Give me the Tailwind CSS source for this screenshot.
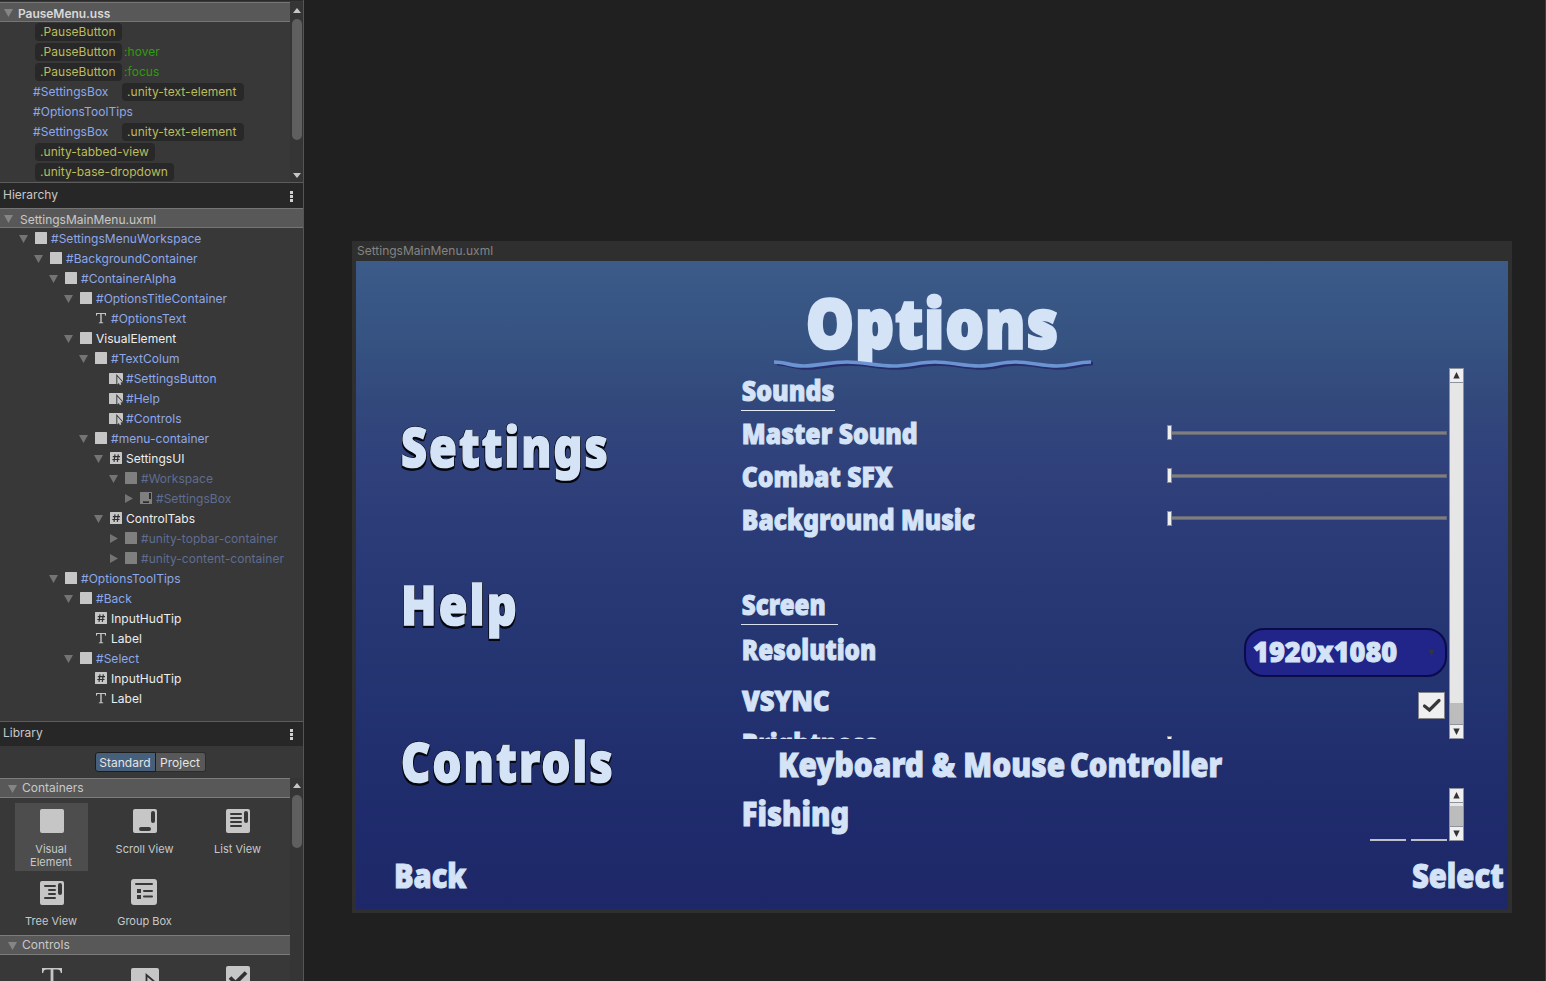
<!DOCTYPE html>
<html lang="en">
<head>
<meta charset="utf-8">
<title>UI Builder</title>
<script src="https://cdn.jsdelivr.net/npm/@tailwindcss/browser@4"></script>
</head>
<body class="w-[1546px] h-[981px] overflow-hidden bg-[#202020] font-['Inter',sans-serif] text-xs text-[#c8c8c8] flex">
<svg class="hidden">
  <symbol id="down" viewBox="0 0 9 8"><path d="M0 0h9L4.500 8z" fill="currentColor"/></symbol>
  <symbol id="right" viewBox="0 0 9 9"><path d="M1 0v9l8-4.500z" fill="currentColor"/></symbol>
  <symbol id="box" viewBox="0 0 14 14"><rect x="1" y="1" width="12" height="12" rx=".5" fill="#c6c6c6"/></symbol>
  <symbol id="text" viewBox="0 0 14 14"><path d="M2 2h10v2.800h-.8c0-1.300-.3-1.900-1.200-1.900H7.700v8.300l1.500.3v.7H4.800v-.7l1.500-.3V2.900H4c-.9 0-1.200.6-1.200 1.900H2z" fill="#c6c6c6"/></symbol>
  <symbol id="btn" viewBox="0 0 14 14"><rect y="2" width="14" height="11" rx=".5" fill="#c6c6c6"/><path d="M7.300 3v11h6.700v-3.500z" fill="#383838"/><path d="M8.300 5.600v7.900l1.600-1.500.9 2 1.500-.6-.8-1.900 2.100-.3z" fill="#c6c6c6"/></symbol>
  <symbol id="hash" viewBox="0 0 14 14"><rect x="1" y="1" width="12" height="12" rx=".5" fill="#c6c6c6"/><path d="M6 3.300l-1 7.500M9.300 3.300l-1 7.500M3.800 5.600H11M3.300 8.500h7.200" stroke="#303030" stroke-width="1.200" fill="none"/></symbol>
  <symbol id="scroll" viewBox="0 0 14 14"><rect x="1" y="1" width="12" height="12" rx=".5" fill="#c6c6c6"/><rect x="10" y="2" width="2" height="6" fill="#202020"/><rect x="4" y="10.300" width="6" height="1.700" fill="#202020"/></symbol>
</svg>

<aside class="w-[304px] h-full shrink-0 bg-[#383838] border-r border-[#555] flex flex-col overflow-hidden">
  <!-- Style sheets -->
  <section class="h-[183px] shrink-0 flex pt-[2px] border-b border-[#5c5c5c] relative">
    <div class="absolute inset-x-0 top-0 h-px bg-[#2a2a2a]"></div>
    <div class="w-[290px] overflow-hidden">
      <div class="h-5 bg-[#585858] border-y border-[#757575] flex items-center pl-1 gap-[5px]"><svg class="w-[9px] h-2 mt-0.5 text-[#858585]"><use href="#down"/></svg><b class="text-[12px] font-semibold tracking-[-.04px] text-[#d8d8d8] pt-[3px] leading-4">PauseMenu.uss</b></div>
      <div class="flex flex-col text-[#bcbc5c] leading-[18px] tracking-[.05px] *:h-5 *:flex *:items-center *:pl-[33px]">
        <div><span class="bg-[#282828] rounded-sm ml-[2px] px-[5px] w-[87px] h-[18px]">.PauseButton</span></div>
        <div><span class="bg-[#282828] rounded-sm ml-[2px] px-[5px] w-[87px] h-[18px]">.PauseButton</span><span class="text-[#2f9c0a] pl-[2px]">:hover</span></div>
        <div><span class="bg-[#282828] rounded-sm ml-[2px] px-[5px] w-[87px] h-[18px]">.PauseButton</span><span class="text-[#2f9c0a] pl-[2px]">:focus</span></div>
        <div><span class="text-[#8ea8ea] w-[89px]">#SettingsBox</span><span class="bg-[#282828] rounded-sm px-[5px] w-[122px] h-[18px]">.unity-text-element</span></div>
        <div><span class="text-[#8ea8ea]">#OptionsToolTips</span></div>
        <div><span class="text-[#8ea8ea] w-[89px]">#SettingsBox</span><span class="bg-[#282828] rounded-sm px-[5px] w-[122px] h-[18px]">.unity-text-element</span></div>
        <div><span class="bg-[#282828] rounded-sm ml-[2px] px-[5px] w-[120px] h-[18px]">.unity-tabbed-view</span></div>
        <div><span class="bg-[#282828] rounded-sm ml-[2px] px-[5px] w-[139px] h-[18px]">.unity-base-dropdown</span></div>
      </div>
    </div>
    <div class="w-[13px] bg-[#353535] flex flex-col items-center pt-1.5 pb-1">
      <svg class="w-2 h-[5px]" viewBox="0 0 8 5"><path d="M0 5h8L4 0z" fill="#c6c6c6"/></svg>
      <div class="w-[10px] h-[121px] mt-1.5 ml-px rounded-full bg-[#5f5f5f]"></div>
      <svg class="w-2 h-[5px] mt-auto" viewBox="0 0 8 5"><path d="M0 0h8L4 5z" fill="#c6c6c6"/></svg>
    </div>
  </section>

  <!-- Hierarchy -->
  <div class="h-[25px] shrink-0 bg-[#272727] pl-[3px] pr-[10px] flex items-center justify-between"><span class="-mt-0.5">Hierarchy</span><svg class="w-[3px] h-[11px] mt-px" viewBox="0 0 3 11"><path d="M0 0h3v3H0zM0 4h3v3H0zM0 8h3v3H0z" fill="#d0d0d0"/></svg></div>
  <section class="h-[513px] shrink-0">
    <div class="h-5 bg-[#585858] border-y border-[#757575] flex items-center pl-1 gap-[7px]"><svg class="w-[9px] h-2 mt-0.5 text-[#858585]"><use href="#down"/></svg><span class="pt-[3px] leading-4">SettingsMainMenu.uxml</span></div>
    <div id="tree"></div>
  </section>

  <!-- Library -->
  <div class="h-[25px] shrink-0 bg-[#272727] border-t border-[#5c5c5c] pl-[3px] pr-[10px] flex items-center justify-between"><span class="-mt-0.5">Library</span><svg class="w-[3px] h-[11px]" viewBox="0 0 3 11"><path d="M0 0h3v3H0zM0 4h3v3H0zM0 8h3v3H0z" fill="#d0d0d0"/></svg></div>
  <div class="h-8 shrink-0 flex items-center justify-center pr-[3px] text-[#e4e4e4] leading-[19px]">
    <div class="w-[61px] h-5 bg-[#46607c] border border-[#1c1c1c] rounded-l-[3px] text-center">Standard</div>
    <div class="w-[50px] h-5 bg-[#585858] border border-l-0 border-[#2c2c2c] rounded-r-[3px] text-center">Project</div>
  </div>
  <section class="flex h-[210px] shrink-0">
    <div class="w-[290px] shrink-0">
      <div class="h-5 bg-[#585858] border-y border-[#7c7c7c] flex items-center pl-2 gap-[5px]"><svg class="w-[9px] h-2 text-[#858585] mt-0.5"><use href="#down"/></svg><span>Containers</span></div>
      <div class="grid grid-cols-[73px_73px_73px] gap-x-5 px-[15px] pt-[5px] text-[11px] leading-[13px] text-center h-[137px] content-start">
        <div class="h-[68px] bg-[#4d4d4d] flex flex-col items-center pt-1.5"><svg class="w-6 h-6 ml-px" viewBox="0 0 24 24"><rect width="24" height="24" rx="2" fill="#c6c6c6"/></svg><span class="mt-[10px] mr-px">Visual<br>Element</span></div>
        <div class="h-[68px] flex flex-col items-center pt-1.5"><svg class="w-6 h-6 ml-px" viewBox="0 0 24 24"><rect width="24" height="24" rx="2" fill="#c6c6c6"/><rect x="18" y="2" width="4" height="12" rx="2" fill="#383838"/><rect x="6" y="18" width="12" height="4" rx="2" fill="#383838"/></svg><span class="mt-[10px]">Scroll View</span></div>
        <div class="h-[68px] flex flex-col items-center pt-1.5"><svg class="w-6 h-6 ml-px" viewBox="0 0 24 24"><rect width="24" height="24" rx="2" fill="#c6c6c6"/><rect x="18" y="2" width="4" height="12" rx="2" fill="#383838"/><path d="M5 5h10M5 9h10M5 13h10M5 17h10" stroke="#383838" stroke-width="2" stroke-linecap="round"/></svg><span class="mt-[10px]">List View</span></div>
        <div class="h-[64px] flex flex-col items-center pt-[10px]"><svg class="w-6 h-6 ml-px" viewBox="0 0 24 24"><rect width="24" height="24" rx="2" fill="#c6c6c6"/><rect x="18" y="2" width="4" height="12" rx="2" fill="#383838"/><path d="M5 5h10M9 9h6M9 13h6M5 17h10" stroke="#383838" stroke-width="2" stroke-linecap="round"/></svg><span class="mt-[10px] mr-px">Tree View</span></div>
        <div class="h-[64px] flex flex-col items-center pt-2"><svg class="w-[26px] h-[26px] mr-px" viewBox="0 0 26 26"><rect width="26" height="26" rx="3" fill="#c6c6c6"/><path d="M5 5h16M13 12h8M13 17.500h8" stroke="#383838" stroke-width="2" stroke-linecap="round"/><path d="M6 10h4v4H6zM6 16h4v4H6z" fill="#383838"/></svg><span class="mt-[10px]">Group Box</span></div>
      </div>
      <div class="h-5 bg-[#585858] border-y border-[#7c7c7c] flex items-center pl-2 gap-[5px]"><svg class="w-[9px] h-2 text-[#858585] mt-0.5"><use href="#down"/></svg><span>Controls</span></div>
      <div class="flex justify-between items-start pl-[42px] pr-10 pt-[11px]">
        <svg class="w-5 h-6 mt-0.5" viewBox="0 0 20 24"><path d="M0 0h20v5h-1.200C18.500 2.500 17.500 1.500 15 1.500h-3.600V21h2v2h-6.800v-2h2V1.500H5C2.500 1.500 1.500 2.500 1.200 5H0z" fill="#c6c6c6"/></svg>
        <svg class="w-7 h-6 mt-0.5 ml-px" viewBox="0 0 28 24"><rect width="28" height="22" rx="2" fill="#c6c6c6"/><path d="M15.500 7v16l10-7.500z" fill="#c6c6c6" stroke="#303030" stroke-width="1.800"/></svg>
        <svg class="w-6 h-6" viewBox="0 0 24 24"><rect width="24" height="24" rx="2" fill="#c6c6c6"/><path d="M4 11.500l5.500 5.500L20 6.500" fill="none" stroke="#303030" stroke-width="3.800"/></svg>
      </div>
    </div>
    <div class="w-[13px] bg-[#353535] flex flex-col items-center pt-[5px]">
      <svg class="w-2 h-[5px]" viewBox="0 0 8 5"><path d="M0 5h8L4 0z" fill="#c6c6c6"/></svg>
      <div class="w-[10px] h-[53px] mt-[7px] ml-px rounded-full bg-[#5f5f5f]"></div>
    </div>
  </section>
</aside>

<main class="flex-1 pl-12 pt-[241px] border-r border-[#3c3c3c]">
  <div class="w-[1160px] h-[672px] bg-[#2f2f2f] px-1">
    <div class="h-5 pl-px text-[#848484] leading-[19px]">SettingsMainMenu.uxml</div>
    <div class="h-[648px] bg-linear-[180deg,#3c5b89_0%,#355281_13%,#32487b_22%,#2f407b_32%,#2a3a76_45%,#253572_60%,#212f6e_75%,#1e2a6b_90%,#1e2868_100%] text-[#d5e3f7] font-['Noto_Sans',sans-serif] font-black whitespace-nowrap overflow-hidden [-webkit-text-stroke:1px_#d5e3f7]">
      <!-- Title -->
      <header class="h-[106px] relative text-center">
        <h1 class="text-[68px] leading-[121px] tracking-[2px] indent-[2px] scale-x-[.875] [-webkit-text-stroke:3.500px_#d5e3f7]">Options</h1>
        <svg class="absolute left-[418px] top-[95px] w-[320px] h-4" viewBox="0 0 320 16" fill="none" stroke-width="3.600">
          <path d="M3 7.800C14 7.800 20 12 33 12S60 8 76 8s30 4 46 4 27-4 42-4 29 4 44 4 21-4 36-4 27 4 42 4 21-4.500 33-4.500" stroke="#262c6c"/>
          <path d="M0 6C11 6 17 10 30 10S57 6 73 6s30 4 46 4S146 6 161 6s29 4 44 4S226 6 241 6s27 4 42 4S302 6 317 6" stroke="#6c94d2"/>
        </svg>
      </header>
      <div class="flex h-[472px]">
        <!-- Menu -->
        <nav class="w-[385px] pl-[45px] pt-px text-[54px] tracking-[2.500px] leading-[157px] *:h-[157.500px] *:origin-left [-webkit-text-stroke:1.600px_#d5e3f7] [text-shadow:0_3px_0_#05070f,1.500px_2.500px_0_#05070f,-1.500px_2.500px_0_#05070f,1.500px_0_0_#05070f,-1.500px_0_0_#05070f,0_-1.500px_0_#05070f,1px_-1px_0_#05070f,-1px_-1px_0_#05070f]">
          <div class="scale-x-[.833]">Settings</div>
          <div class="scale-x-[.86]">Help</div>
          <div class="scale-x-[.84]">Controls</div>
        </nav>
        <div class="w-[723px]">
          <!-- Settings list -->
          <section class="h-[372px] flex justify-between pt-px">
            <div class="w-[706px] h-[371px] pt-px overflow-hidden text-[29px] leading-[42px]">
              <div class="h-[42px] w-[94px] border-b border-[#e4ecfa]"><div class="pl-px origin-left scale-x-[.858]">Sounds</div></div>
              <div class="h-[43px] flex justify-between items-center"><div class="w-50 pl-px pt-px origin-left scale-x-[.853]">Master Sound</div>
                <div class="w-[280px] flex items-center"><i class="w-[5px] h-[15px] bg-[#efefef] border border-[#8b8b90]"></i><i class="flex-1 h-1 bg-[#7e7e7e] border-y border-r border-[#646778]"></i></div></div>
              <div class="h-[43px] flex justify-between items-center"><div class="w-50 pl-px origin-left scale-x-[.85]">Combat SFX</div>
                <div class="w-[280px] flex items-center"><i class="w-[5px] h-[15px] bg-[#efefef] border border-[#8b8b90]"></i><i class="flex-1 h-1 bg-[#7e7e7e] border-y border-r border-[#646778]"></i></div></div>
              <div class="h-[42px] flex justify-between items-center"><div class="w-50 pl-px pt-0.5 origin-left scale-x-[.848]">Background Music</div>
                <div class="w-[280px] flex items-center"><i class="w-[5px] h-[15px] bg-[#efefef] border border-[#8b8b90]"></i><i class="flex-1 h-1 bg-[#7e7e7e] border-y border-r border-[#646778]"></i></div></div>
              <div class="mt-11 h-[42px] w-[97px] border-b border-[#d8dff0]"><div class="pl-px origin-left scale-x-[.833]">Screen</div></div>
              <div class="h-[55px] flex justify-between"><div class="w-50 pl-px leading-[48px] origin-left scale-x-[.838]">Resolution</div>
                <div class="mt-[3px] w-[203px] h-[49px] rounded-[20px] border-2 border-[#0b0b4a] bg-[#212488] flex items-center justify-between pl-[7px] pr-[10px] leading-[40px]"><div class="w-40 -mt-[3px] origin-left scale-x-[.935]">1920x1080</div><svg class="w-[7px] h-[6px]" viewBox="0 0 7 6"><path d="M.5 0h6l-3 6z" fill="#35353f"/></svg></div></div>
              <div class="h-11 flex justify-between"><div class="w-50 pl-px leading-[40px] origin-left scale-x-[.885]">VSYNC</div>
                <svg class="mt-[12px] mr-[2px] w-[27px] h-[27px]" viewBox="0 0 27 27"><rect x=".5" y=".5" width="26" height="26" fill="#efefef" stroke="#83838c"/><path d="M6.500 14l5 4L21 8.500" fill="none" stroke="#383838" stroke-width="3.200" stroke-linecap="round"/></svg></div>
              <div class="h-[38px] flex justify-between items-center"><div class="w-50 pl-px origin-left scale-x-[.84]">Brightness</div>
                <div class="w-[280px] flex items-center"><i class="w-[5px] h-[15px] bg-[#efefef] border border-[#8b8b90]"></i><i class="flex-1 h-1 bg-[#7e7e7e]"></i></div></div>
            </div>
            <div class="w-[15px] h-[371px] bg-[#e6e6e6] border border-[#8e929e] flex flex-col">
              <div class="h-[14px] bg-[#efefef] border-b border-[#8e929e] grid place-items-center"><svg class="w-[7px] h-[7px]" viewBox="0 0 7 7"><path d="M.3 6.500h6.400L3.500 0z" fill="#333"/></svg></div>
              <div class="flex-1"></div>
              <div class="h-[21px] bg-[#bcbcbc]"></div>
              <div class="h-[14px] bg-[#efefef] border-t border-[#8e929e] grid place-items-center"><svg class="w-[7px] h-[7px]" viewBox="0 0 7 7"><path d="M.3 .5h6.400L3.500 7z" fill="#333"/></svg></div>
            </div>
          </section>
          <!-- Tabs -->
          <div class="h-[49px] pl-[37px] flex text-[34px] leading-[50px]">
            <div class="w-[292px] origin-left scale-x-[.878]">Keyboard &amp; Mouse</div><div class="origin-left scale-x-[.855]">Controller</div>
          </div>
          <section class="h-[53px] flex justify-between">
            <div class="w-[706px] overflow-hidden flex justify-between items-end text-[34px]">
              <div class="leading-[51px] pl-px self-start origin-left scale-x-[.855]">Fishing</div>
              <div class="flex gap-[5px] *:w-9 *:h-[2px] *:bg-[#bfc1c8]"><i></i><i></i></div>
            </div>
            <div class="w-[15px] h-[53px] bg-[#e6e6e6] border border-[#8e929e] flex flex-col">
              <div class="h-[14px] bg-[#efefef] border-b border-[#8e929e] grid place-items-center"><svg class="w-[7px] h-[7px]" viewBox="0 0 7 7"><path d="M.3 6.500h6.400L3.500 0z" fill="#333"/></svg></div>
              <div class="h-[3px]"></div>
              <div class="flex-1 bg-[#bcbcbc]"></div>
              <div class="h-[14px] bg-[#efefef] border-t border-[#8e929e] grid place-items-center"><svg class="w-[7px] h-[7px]" viewBox="0 0 7 7"><path d="M.3 .5h6.400L3.500 7z" fill="#333"/></svg></div>
            </div>
          </section>
        </div>
      </div>
      <!-- Tool tips -->
      <footer class="h-[70px] flex justify-between text-[34px] leading-[73px] pl-[38px] pr-1">
        <div class="origin-left scale-x-[.855]">Back</div><div class="origin-right scale-x-[.86]">Select</div>
      </footer>
    </div>
  </div>
</main>

<script>
// level, arrow (d = open, r = closed, empty = leaf), icon, label, colour (b = named, w = type name, g = read only)
const rows = [
 [0,'d','box','#SettingsMenuWorkspace','b'],[1,'d','box','#BackgroundContainer','b'],[2,'d','box','#ContainerAlpha','b'],
 [3,'d','box','#OptionsTitleContainer','b'],[4,'','text','#OptionsText','b'],[3,'d','box','VisualElement','w'],
 [4,'d','box','#TextColum','b'],[5,'','btn','#SettingsButton','b'],[5,'','btn','#Help','b'],[5,'','btn','#Controls','b'],
 [4,'d','box','#menu-container','b'],[5,'d','hash','SettingsUI','w'],[6,'d','box','#Workspace','g'],[7,'r','scroll','#SettingsBox','g'],
 [5,'d','hash','ControlTabs','w'],[6,'r','box','#unity-topbar-container','g'],[6,'r','box','#unity-content-container','g'],
 [2,'d','box','#OptionsToolTips','b'],[3,'d','box','#Back','b'],[4,'','hash','InputHudTip','w'],[4,'','text','Label','w'],
 [3,'d','box','#Select','b'],[4,'','hash','InputHudTip','w'],[4,'','text','Label','w']];
const colour = {b:'text-[#8ea8ea]', w:'text-[#ededed]', g:'text-[#5f6d92]'};
const arrow = {d:'<svg class="w-[9px] h-2 mt-px"><use href="#down"/></svg>', r:'<svg class="w-[9px] h-[9px] mt-px"><use href="#right"/></svg>', '':''};
document.getElementById('tree').innerHTML = rows.map(([l,a,i,t,c]) =>
 `<div class="h-5 flex items-center" style="padding-left:${19+l*15}px"><span class="w-[15px] text-[#747474]">${arrow[a]}</span><svg class="w-[14px] h-[14px] mr-[3px] ${c==='g'?'opacity-50':''}"><use href="#${i}"/></svg><span class="mt-0.5 tracking-[.03px] ${colour[c]}">${t}</span></div>`).join('');
</script>
</body>
</html>
